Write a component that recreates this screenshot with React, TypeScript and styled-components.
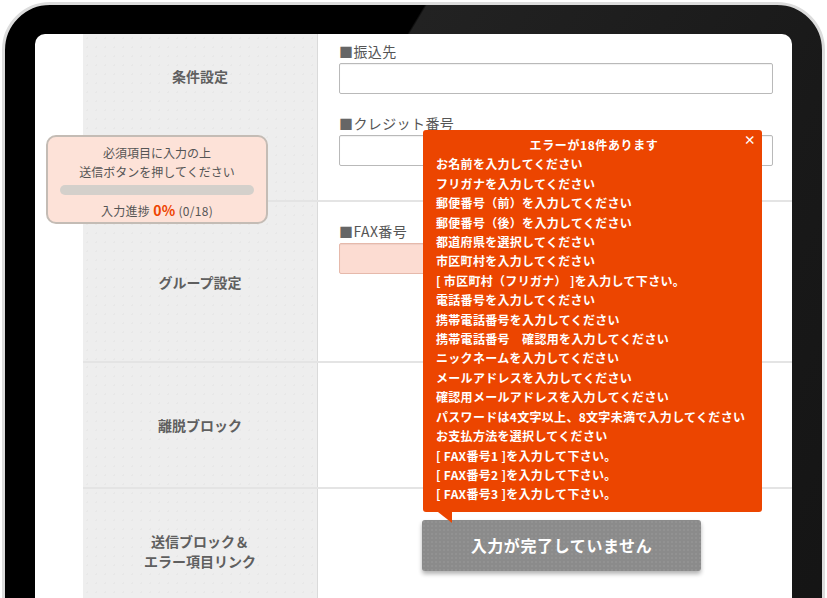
import styled, { createGlobalStyle } from 'styled-components';

const GlobalStyle = createGlobalStyle`
  html, body {
    margin: 0;
    padding: 0;
    height: 598px;
    overflow: hidden;
    background: #ffffff;
  }
  body {
    font-family: "Noto Sans CJK JP", "Noto Sans", sans-serif;
    color: #555;
  }
`;

const Device = styled.div`
  box-sizing: border-box;
  width: 823px;
  height: 700px;
  margin: 2px 0 0 2px;
  padding: 29px 30px 0 30px;
  border: 3px solid #dcdcdc;
  border-radius: 48px;
  background: linear-gradient(121deg, #000 34%, #222 34.2%, #191919 70%, #141414 100%);
`;

const Screen = styled.div`
  position: relative;
  display: flex;
  height: 100%;
  background: #fff;
  border-radius: 10px 10px 0 0;
  overflow: hidden;
`;

const Gutter = styled.div`
  width: 48px;
  flex-shrink: 0;
`;

const FormTable = styled.div`
  flex: 1;
  display: flex;
  flex-direction: column;
`;

const Row = styled.div<{ $height: number }>`
  display: grid;
  grid-template-columns: 235px 1fr;
  height: ${p => p.$height}px;
  border-bottom: 2px solid #e4e4e4;
  flex-shrink: 0;
`;

const LabelCell = styled.div<{ $top?: number }>`
  box-sizing: border-box;
  display: flex;
  justify-content: center;
  align-items: ${p => (p.$top !== undefined ? 'flex-start' : 'center')};
  padding-top: ${p => p.$top ?? 0}px;
  background-color: #eeeeee;
  background-image: radial-gradient(rgba(0, 0, 0, 0.025) 1px, transparent 1px);
  background-size: 9px 9px;
  border-right: 1px solid #dadada;
  font-size: 14px;
  line-height: 20px;
  font-weight: 700;
  color: #5f5f5f;
  text-align: center;
`;

const ContentCell = styled.div<{ $top: number; $left?: number }>`
  display: flex;
  flex-direction: column;
  align-items: flex-start;
  padding: ${p => p.$top}px 19px 0 ${p => p.$left ?? 21}px;
`;

const Field = styled.div`
  align-self: stretch;
  display: flex;
  flex-direction: column;
  gap: 2px;
  & + & {
    margin-top: 19px;
  }
`;

const FieldLabel = styled.div`
  font-size: 14px;
  line-height: 20px;
  letter-spacing: 0.4px;
  color: #555;
  &::before {
    content: '■';
    color: #666;
  }
`;

const TextInput = styled.div<{ $error?: boolean; $width?: number }>`
  box-sizing: border-box;
  width: ${p => (p.$width ? `${p.$width}px` : '100%')};
  height: 31px;
  border: 1px solid ${p => (p.$error ? '#e6b9ab' : '#b9b9b9')};
  border-radius: 2px;
  background: ${p => (p.$error ? '#fcdcd2' : '#fff')};
  box-shadow: inset 0 1px 1px rgba(0, 0, 0, 0.06);
`;

const SubmitButton = styled.button`
  width: 279px;
  height: 51px;
  border: none;
  border-radius: 3px;
  background-color: #8b8b8b;
  background-image: radial-gradient(rgba(255, 255, 255, 0.06) 1px, transparent 1px);
  background-size: 4px 4px;
  box-shadow: 0 3px 4px rgba(0, 0, 0, 0.3);
  color: #fff;
  font-family: inherit;
  font-size: 16px;
  font-weight: 700;
  letter-spacing: 0.6px;
  padding: 0 0 2px;
`;

const ProgressBox = styled.div`
  position: absolute;
  left: 11px;
  top: 101px;
  box-sizing: border-box;
  width: 222px;
  height: 89px;
  padding: 6px 12px 0;
  border: 2px solid #c4bcb5;
  border-radius: 10px;
  background: #fde2d8;
  text-align: center;
  font-size: 12px;
  line-height: 19px;
  color: #555;
`;

const ProgressTrack = styled.div`
  height: 10px;
  margin: 4px 0 6px;
  border-radius: 5px;
  background: #d4d0cb;
`;

const ProgressText = styled.div`
  font-size: 12px;
  letter-spacing: 0.3px;
  strong {
    color: #ee4400;
    font-size: 14px;
    font-weight: 700;
    margin: 0 3px;
  }
`;

const ErrorPopup = styled.div`
  position: absolute;
  left: 388px;
  top: 96px;
  box-sizing: border-box;
  width: 339px;
  height: 382px;
  padding: 5px 10px 0 13px;
  border-radius: 3px;
  background: #ec4500;
  color: #fff;
  font-size: 12px;
  line-height: 19.4px;
  font-weight: 700;
  letter-spacing: 0.3px;
  &::after {
    content: '';
    position: absolute;
    left: 15px;
    top: 100%;
    width: 0;
    height: 0;
    border-top: 11px solid #ec4500;
    border-left: 14px solid transparent;
  }
`;

const PopupTitle = styled.div`
  text-align: center;
  letter-spacing: 0.6px;
`;

const CloseMark = styled.span`
  position: absolute;
  top: 2px;
  right: 6px;
  font-size: 12px;
  font-weight: 700;
  line-height: 16px;
`;

const ErrorList = styled.ul`
  margin: 0;
  padding: 0;
  list-style: none;
`;

const errors = [
  'お名前を入力してください',
  'フリガナを入力してください',
  '郵便番号（前）を入力してください',
  '郵便番号（後）を入力してください',
  '都道府県を選択してください',
  '市区町村を入力してください',
  '[ 市区町村（フリガナ） ]を入力して下さい。',
  '電話番号を入力してください',
  '携帯電話番号を入力してください',
  '携帯電話番号　確認用を入力してください',
  'ニックネームを入力してください',
  'メールアドレスを入力してください',
  '確認用メールアドレスを入力してください',
  'パスワードは4文字以上、8文字未満で入力してください',
  'お支払方法を選択してください',
  '[ FAX番号1 ]を入力して下さい。',
  '[ FAX番号2 ]を入力して下さい。',
  '[ FAX番号3 ]を入力して下さい。',
];

const App = () => {
  return (
    <>
      <GlobalStyle />
      <Device>
        <Screen>
          <Gutter />
          <FormTable>
            <Row $height={166}>
              <LabelCell $top={32}>条件設定</LabelCell>
              <ContentCell $top={7}>
                <Field>
                  <FieldLabel>振込先</FieldLabel>
                  <TextInput />
                </Field>
                <Field>
                  <FieldLabel>クレジット番号</FieldLabel>
                  <TextInput />
                </Field>
              </ContentCell>
            </Row>
            <Row $height={159}>
              <LabelCell>グループ設定</LabelCell>
              <ContentCell $top={19}>
                <Field>
                  <FieldLabel>FAX番号</FieldLabel>
                  <TextInput $error $width={380} />
                </Field>
              </ContentCell>
            </Row>
            <Row $height={124}>
              <LabelCell>離脱ブロック</LabelCell>
              <ContentCell $top={0} />
            </Row>
            <Row $height={124}>
              <LabelCell>
                送信ブロック＆
                <br />
                エラー項目リンク
              </LabelCell>
              <ContentCell $top={31} $left={104}>
                <SubmitButton>入力が完了していません</SubmitButton>
              </ContentCell>
            </Row>
          </FormTable>

          <ProgressBox>
            <div>必須項目に入力の上</div>
            <div>送信ボタンを押してください</div>
            <ProgressTrack />
            <ProgressText>
              入力進捗<strong>0%</strong>(0/18)
            </ProgressText>
          </ProgressBox>

          <ErrorPopup>
            <CloseMark>×</CloseMark>
            <PopupTitle>エラーが18件あります</PopupTitle>
            <ErrorList>
              {errors.map(e => (
                <li key={e}>{e}</li>
              ))}
            </ErrorList>
          </ErrorPopup>
        </Screen>
      </Device>
    </>
  );
};

export default App;
